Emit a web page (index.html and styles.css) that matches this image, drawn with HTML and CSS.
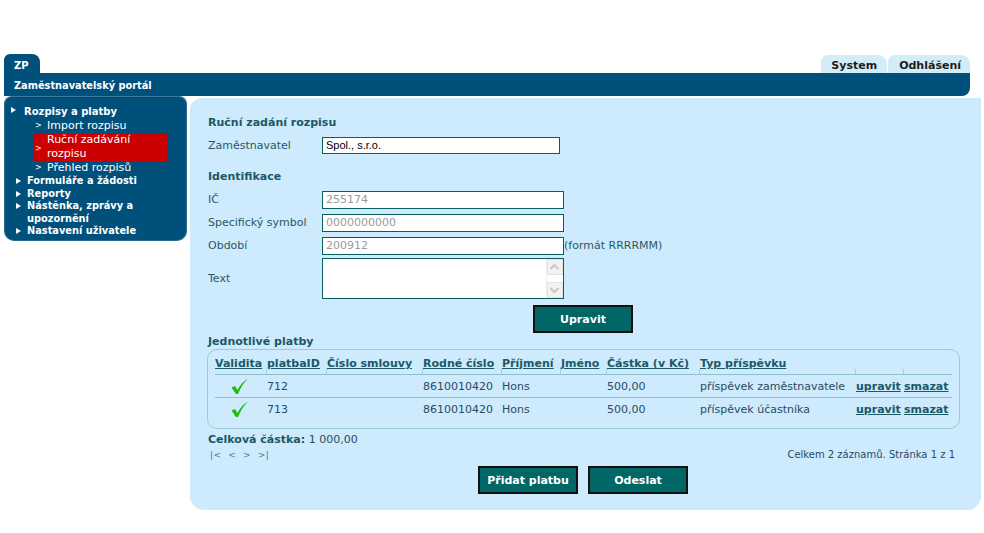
FILE: index.html
```html
<!DOCTYPE html>
<html lang="cs">
<head>
<meta charset="utf-8">
<title>Zaměstnavatelský portál</title>
<link rel="stylesheet" href="styles.css">
</head>
<body>
<div class="page">
  <div class="tabs">
    <div class="tab-zp">ZP</div>
    <div class="tabs-right">
      <a class="tab-light">System</a>
      <a class="tab-light">Odhlášení</a>
    </div>
  </div>
  <div class="bar">Zaměstnavatelský portál</div>
  <div class="main">
    <nav class="sidebar">
      <ul class="menu">
        <li class="top big"><span class="tri"></span>Rozpisy a platby
          <ul class="sub">
            <li><span class="gt">&gt;</span>Import rozpisu</li>
            <li class="active"><span class="gt">&gt;</span>Ruční zadávání<br>rozpisu</li>
            <li><span class="gt">&gt;</span>Přehled rozpisů</li>
          </ul>
        </li>
        <li class="top"><span class="tri"></span>Formuláře a žádosti</li>
        <li class="top"><span class="tri"></span>Reporty</li>
        <li class="top"><span class="tri"></span>Nástěnka, zprávy a<br>upozornění</li>
        <li class="top"><span class="tri"></span>Nastavení uživatele</li>
      </ul>
    </nav>
    <section class="content">
      <h2 class="h">Ruční zadání rozpisu</h2>
      <div class="row r-zam">
        <span class="lbl">Zaměstnavatel</span>
        <span class="inp inp-zam">Spol., s.r.o.</span>
      </div>
      <h2 class="h h-id">Identifikace</h2>
      <div class="row">
        <span class="lbl">IČ</span>
        <span class="inp grey">255174</span>
      </div>
      <div class="row">
        <span class="lbl">Specifický symbol</span>
        <span class="inp grey">0000000000</span>
      </div>
      <div class="row">
        <span class="lbl">Období</span>
        <span class="inp grey">200912</span>
        <span class="hint">(formát RRRRMM)</span>
      </div>
      <div class="row r-text">
        <span class="lbl">Text</span>
        <div class="textarea">
          <div class="ta-body"></div>
          <div class="ta-scroll">
            <span class="arr"><svg width="15" height="16" viewBox="0 0 15 16"><path d="M3.5 10 L7.5 6 L11.5 10" fill="none" stroke="#c8c8c8" stroke-width="2"/></svg></span>
            <span class="arr"><svg width="15" height="16" viewBox="0 0 15 16"><path d="M3.5 6 L7.5 10 L11.5 6" fill="none" stroke="#c8c8c8" stroke-width="2"/></svg></span>
          </div>
        </div>
      </div>
      <div class="btnrow b-upr"><button class="btn">Upravit</button></div>
      <h2 class="h h-pl">Jednotlivé platby</h2>
      <div class="tablebox">
        <table class="grid">
          <thead>
            <tr>
              <th class="c-val"><a>Validita</a></th>
              <th class="c-id"><a>platbaID</a></th>
              <th class="c-cs"><a>Číslo smlouvy</a></th>
              <th class="c-rc"><a>Rodné číslo</a></th>
              <th class="c-pr"><a>Příjmení</a></th>
              <th class="c-jm"><a>Jméno</a></th>
              <th class="c-ca"><a>Částka (v Kč)</a></th>
              <th class="c-typ"><a>Typ příspěvku</a></th>
              <th class="c-up"></th>
              <th class="c-sm"></th>
            </tr>
          </thead>
          <tbody>
            <tr>
              <td class="c-val"><svg class="check" width="19" height="17" viewBox="0 0 19 17"><path d="M1.5 9.5 L5 8 L7.5 12 C10 7 13.5 3 18 0.5 C14 4.5 10.5 9.5 8 16 L6 16 Z" fill="#22bb11"/></svg></td>
              <td>712</td>
              <td></td>
              <td>8610010420</td>
              <td>Hons</td>
              <td></td>
              <td>500,00</td>
              <td>příspěvek zaměstnavatele</td>
              <td><a class="act">upravit</a></td>
              <td><a class="act">smazat</a></td>
            </tr>
            <tr>
              <td class="c-val"><svg class="check" width="19" height="17" viewBox="0 0 19 17"><path d="M1.5 9.5 L5 8 L7.5 12 C10 7 13.5 3 18 0.5 C14 4.5 10.5 9.5 8 16 L6 16 Z" fill="#22bb11"/></svg></td>
              <td>713</td>
              <td></td>
              <td>8610010420</td>
              <td>Hons</td>
              <td></td>
              <td>500,00</td>
              <td>příspěvek účastníka</td>
              <td><a class="act">upravit</a></td>
              <td><a class="act">smazat</a></td>
            </tr>
          </tbody>
        </table>
      </div>
      <div class="total"><b>Celková částka:</b> 1 000,00</div>
      <div class="pager">
        <span class="nav">|&lt;&nbsp;&nbsp;&lt;&nbsp;&nbsp;&gt;&nbsp;&nbsp;&gt;|</span>
        <span class="count">Celkem 2 záznamů. Stránka 1 z 1</span>
      </div>
      <div class="btnrow b-bottom">
        <button class="btn">Přidat platbu</button>
        <button class="btn">Odeslat</button>
      </div>
    </section>
  </div>
</div>
</body>
</html>
```
FILE: styles.css
```css
html, body {
  margin: 0;
  padding: 0;
  background: #ffffff;
}
body {
  font-family: "DejaVu Sans", Verdana, sans-serif;
  font-size: 11px;
  color: #2b5866;
}
.page {
  padding: 54px 0 0 4px;
  width: 977px;
}
.tabs {
  display: flex;
  justify-content: space-between;
  width: 966px;
  height: 19px;
}
.tab-zp {
  width: 36px;
  background: #00507c;
  color: #ffffff;
  font-weight: bold;
  font-size: 10px;
  border-radius: 6px 8px 0 0;
  padding: 6px 0 0 10px;
  box-sizing: border-box;
}
.tabs-right {
  display: flex;
  padding-top: 1px;
}
.tab-light {
  background: #d3edf8;
  color: #1c1c1c;
  font-weight: bold;
  font-size: 11px;
  padding: 4px 10px 0 10px;
  border-radius: 7px 9px 0 0;
  height: 18px;
  box-sizing: border-box;
}
.tab-light + .tab-light {
  margin-left: 1px;
  padding: 4px 9px 0 11px;
}
.bar {
  width: 966px;
  height: 23px;
  background: #00507c;
  color: #ffffff;
  font-weight: bold;
  font-size: 9.8px;
  padding: 7px 0 0 10px;
  box-sizing: border-box;
  border-radius: 0 0 8px 0;
}
.main {
  display: flex;
  align-items: flex-start;
  gap: 3px;
}
.sidebar {
  width: 183px;
  background: #00507c;
  border: 1px solid #2f6d90;
  border-top-color: #3d7a9c;
  border-radius: 8px 8px 10px 10px;
  box-sizing: border-box;
  height: 145px;
  color: #ffffff;
  padding-top: 8px;
}
.menu, .sub {
  list-style: none;
  margin: 0;
  padding: 0;
}
.menu > .top {
  position: relative;
  font-weight: bold;
  font-size: 9.8px;
  line-height: 12.5px;
  padding-left: 22px;
}
.menu > .top.big {
  font-size: 10px;
  line-height: 14px;
  padding-left: 19px;
}
.tri {
  position: absolute;
  left: 11px;
  top: 3px;
  width: 0;
  height: 0;
  border-left: 5px solid #ffffff;
  border-top: 3px solid transparent;
  border-bottom: 3px solid transparent;
}
.big .tri {
  left: 6px;
  top: 2px;
}
.sub {
  font-weight: normal;
  font-size: 11px;
  line-height: 14px;
  margin: 0 0 0 9px;
}
.sub li {
  position: relative;
  padding-left: 14px;
  width: 120px;
}
.sub li.active {
  background: #cc0000;
}
.gt {
  position: absolute;
  left: 2px;
  top: 0;
  font-size: 8px;
}
.sub li.active .gt {
  top: 9px;
}
.content {
  width: 791px;
  height: 412px;
  margin-top: 2px;
  background: #cdebfc;
  border-radius: 12px 0 14px 14px;
  box-sizing: border-box;
  padding: 18px 18px 0 18px;
}
.h {
  margin: 0;
  font-size: 11px;
  font-weight: bold;
  color: #1d5766;
  line-height: 14px;
}
.row {
  display: flex;
  align-items: center;
  height: 23px;
}
.r-zam {
  margin-top: 7px;
  height: 17px;
}
.lbl {
  width: 114px;
  flex: none;
  color: #2b5866;
}
.inp {
  display: block;
  width: 242px;
  height: 18px;
  background: #ffffff;
  border: 1px solid #0c5e5e;
  box-sizing: border-box;
  padding: 1px 0 0 3px;
  font-size: 11px;
  color: #000;
}
.inp-zam {
  width: 238px;
  height: 17px;
  font-family: "Liberation Sans", Arial, sans-serif;
  font-size: 11px;
  padding-top: 1px;
}
.inp.grey {
  color: #9a9a9a;
  font-size: 11px;
  padding-top: 1px;
}
.h-id {
  margin-top: 16px;
  margin-bottom: 4px;
}
.hint {
  color: #2b5866;
  font-size: 11px;
}
.r-text {
  height: 41px;
  margin-top: 1px;
}
.textarea {
  display: flex;
  width: 242px;
  height: 41px;
  background: #ffffff;
  border: 1px solid #0c5e5e;
  box-sizing: border-box;
}
.ta-body {
  flex: 1;
}
.ta-scroll {
  width: 16px;
  display: flex;
  flex-direction: column;
  justify-content: space-between;
  border-left: 1px solid #eeeeee;
}
.arr {
  display: block;
  height: 16px;
  background: #f2f2f2;
  border: 1px solid #e4e4e4;
  box-sizing: border-box;
}
.arr svg {
  display: block;
  margin-left: -1px;
  margin-top: -1px;
}
.btnrow {
  display: flex;
}
.b-upr {
  padding-left: 325px;
  margin-top: 6px;
}
.btn {
  width: 100px;
  height: 28px;
  background: #006666;
  border: 2px solid #111111;
  color: #ffffff;
  font-family: "DejaVu Sans", Verdana, sans-serif;
  font-weight: bold;
  font-size: 11px;
  padding: 0;
}
.h-pl {
  margin-top: 2px;
}
.tablebox {
  width: 753px;
  height: 80px;
  margin-top: 0;
  margin-left: -1px;
  border: 1px solid #9ccbd3;
  border-radius: 10px;
  box-sizing: border-box;
  padding: 7px 7px 0 7px;
}
.grid {
  border-collapse: collapse;
  width: 737px;
  table-layout: fixed;
}
.grid th, .grid td {
  padding: 0;
  text-align: left;
  white-space: nowrap;
  overflow: visible;
  color: #2a4a62;
  font-size: 11px;
}
.grid th {
  position: relative;
  height: 17px;
  vertical-align: top;
  font-weight: bold;
  border-bottom: 1px solid #8fc1c9;
}
.grid th::after {
  content: "";
  position: absolute;
  right: 0;
  bottom: 0;
  width: 1px;
  height: 5px;
  background: #a9cfd6;
}
.grid th:last-child::after {
  display: none;
}
.grid th a, .act {
  color: #1a5968;
  text-decoration: underline;
  font-weight: bold;
}
.grid td {
  height: 22px;
  border-bottom: 1px solid #8fc1c9;
}
.grid tbody tr:last-child td {
  border-bottom: none;
}
.c-val { width: 52px; }
.c-id { width: 60px; }
.c-cs { width: 96px; }
.c-rc { width: 79px; }
.c-pr { width: 59px; }
.c-jm { width: 46px; }
.c-ca { width: 93px; }
.c-typ { width: 156px; }
.c-up { width: 48px; }
.c-sm { width: 48px; }
td.c-val {
  padding-left: 15px;
}
.check {
  display: block;
}
.total {
  margin-top: 4px;
  color: #2a4a62;
}
.total b {
  color: #1d5766;
}
.pager {
  display: flex;
  justify-content: space-between;
  align-items: flex-end;
  margin-top: 3px;
  width: 747px;
}
.pager .nav {
  color: #4a7a8a;
  font-size: 9px;
  padding-left: 2px;
  letter-spacing: 0.5px;
}
.pager .count {
  color: #2a4a62;
  font-size: 10px;
  padding-bottom: 0;
}
.b-bottom {
  justify-content: flex-start;
  gap: 10px;
  padding-left: 270px;
  margin-top: 6px;
}
```
